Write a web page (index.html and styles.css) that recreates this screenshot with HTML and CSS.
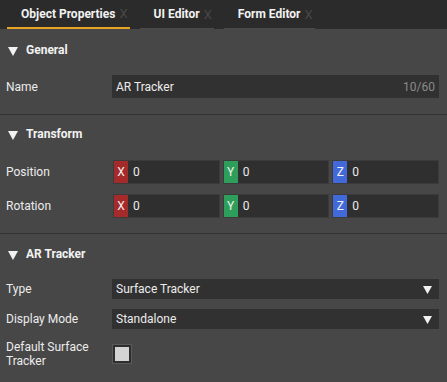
FILE: index.html
```html
<!DOCTYPE html>
<html lang="en">
<head>
  <meta charset="UTF-8">
  <title>Object Properties</title>
  <link rel="stylesheet" href="styles.css">
</head>
<body>

<div class="tabs">
  <div class="tab active">Object Properties<span class="close">X</span></div>
  <div class="tab">UI Editor<span class="close">X</span></div>
  <div class="tab">Form Editor<span class="close">X</span></div>
</div>

<!-- General -->
<div class="section general">
  <div class="section-head">
    <svg class="caret" width="10" height="9" viewBox="0 0 10 9"><path d="M0 0H10L5 9Z" fill="#f2f2f2"/></svg>
    General
  </div>
  <div class="row">
    <div class="label">Name</div>
    <div class="text-input">
      <span>AR Tracker</span>
      <span class="counter">10/60</span>
    </div>
  </div>
</div>

<!-- Transform -->
<div class="section transform">
  <div class="section-head">
    <svg class="caret" width="10" height="9" viewBox="0 0 10 9"><path d="M0 0H10L5 9Z" fill="#f2f2f2"/></svg>
    Transform
  </div>
  <div class="row vec-row">
    <div class="label">Position</div>
    <div class="vec">
      <div class="axis"><span class="badge x">X</span>0</div>
      <div class="axis"><span class="badge y">Y</span>0</div>
      <div class="axis"><span class="badge z">Z</span>0</div>
    </div>
  </div>
  <div class="row vec-row">
    <div class="label">Rotation</div>
    <div class="vec">
      <div class="axis"><span class="badge x">X</span>0</div>
      <div class="axis"><span class="badge y">Y</span>0</div>
      <div class="axis"><span class="badge z">Z</span>0</div>
    </div>
  </div>
</div>

<!-- AR Tracker -->
<div class="section tracker">
  <div class="section-head">
    <svg class="caret" width="10" height="9" viewBox="0 0 10 9"><path d="M0 0H10L5 9Z" fill="#f2f2f2"/></svg>
    AR Tracker
  </div>
  <div class="row select-row">
    <div class="label">Type</div>
    <div class="select">
      <span>Surface Tracker</span>
      <svg width="9" height="8" viewBox="0 0 9 8"><path d="M0 0H9L4.5 8Z" fill="#f2f2f2"/></svg>
    </div>
  </div>
  <div class="row select-row">
    <div class="label">Display Mode</div>
    <div class="select">
      <span>Standalone</span>
      <svg width="9" height="8" viewBox="0 0 9 8"><path d="M0 0H9L4.5 8Z" fill="#f2f2f2"/></svg>
    </div>
  </div>
  <div class="row check-row">
    <div class="label">Default Surface<br>Tracker</div>
    <div class="checkbox"><div class="check-fill"></div></div>
  </div>
</div>

</body>
</html>
```

FILE: styles.css
```css
body {
  margin: 0;
  background: #474747;
  font-family: Roboto, "Liberation Sans", sans-serif;
  font-size: 12px;
  color: #ececec;
  overflow: hidden;
}

.tabs {
  display: flex;
  gap: 10px;
  height: 29px;
  padding-left: 7px;
  background: #2b2b2b;
}

.tab {
  display: flex;
  align-items: center;
  padding: 0 2px 0 14px;
  height: 28px;
  font-weight: bold;
  color: #f2f2f2;
  border-bottom: 1px solid #4a4a4a;
}

.tab.active {
  height: 27px;
  border-bottom: 2px solid #e8a324;
}

.close {
  margin-left: 4px;
  font-weight: normal;
  font-size: 13px;
  color: #484848;
}

.section {
  padding: 10px 8px 16px 6px;
  border-bottom: 1px solid #333;
}

.transform {
  padding-top: 8px;
  padding-bottom: 15px;
}

.tracker {
  padding-top: 9px;
  border-bottom: none;
}

.section-head {
  display: flex;
  align-items: center;
  height: 22px;
  padding-left: 2px;
  font-weight: bold;
  color: #f2f2f2;
}

.caret {
  margin-right: 8px;
  margin-top: 3px;
}

.row {
  display: flex;
  align-items: center;
  margin-top: 14px;
}

.label {
  width: 106px;
  flex-shrink: 0;
  line-height: 14px;
}

.text-input {
  flex: 1;
  height: 23px;
  display: flex;
  align-items: center;
  justify-content: space-between;
  padding: 0 4px;
  background: #313131;
}

.counter {
  color: #8a8a8a;
}

.vec-row {
  margin-top: 15px;
}

.vec-row + .vec-row {
  margin-top: 10px;
}

.vec {
  flex: 1;
  display: grid;
  grid-template-columns: 1fr 1fr 1fr;
  gap: 3px;
  margin-left: 1px;
}

.axis {
  display: flex;
  align-items: center;
  height: 22px;
  border: 1px solid #3b3b3b;
  background: #2f2f2f;
  gap: 5px;
}

.badge {
  width: 14px;
  height: 22px;
  display: flex;
  align-items: center;
  justify-content: center;
  color: #f0f0f0;
}

.badge.x { background: #a52a2a; }
.badge.y { background: #2e9e5b; }
.badge.z { background: #4169d8; }

.select {
  flex: 1;
  height: 20px;
  display: flex;
  align-items: center;
  justify-content: space-between;
  padding: 0 7px 0 4px;
  background: #313131;
}

.select-row + .select-row {
  margin-top: 10px;
}

.select svg {
  margin-top: 2px;
}

.check-row {
  margin-top: 11px;
}

.checkbox {
  width: 14px;
  height: 14px;
  padding: 2px;
  border: 1px solid #5a5a5a;
  background: #2e2e2e;
}

.check-fill {
  width: 14px;
  height: 14px;
  background: #d4d4d4;
}
```
